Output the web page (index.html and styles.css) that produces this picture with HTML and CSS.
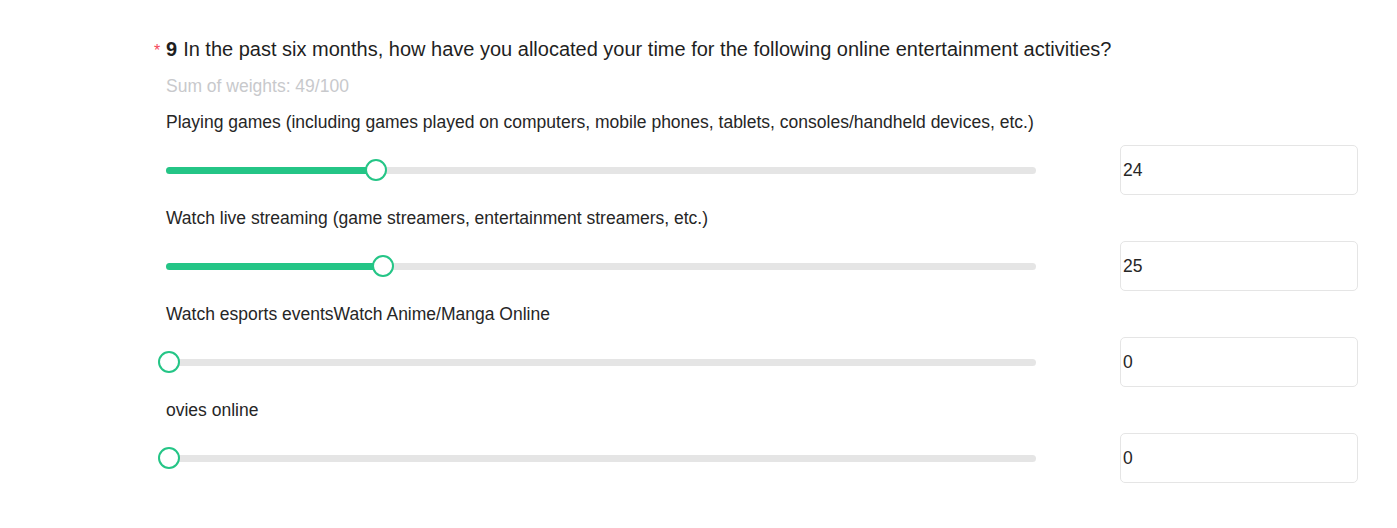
FILE: index.html
```html
<!DOCTYPE html>
<html>
<head>
<meta charset="utf-8">
<link rel="stylesheet" href="styles.css">
</head>
<body>
<div class="question">
  <div class="q-title">
    <span class="req">*</span>
    <span class="q-num">9</span>
    <span class="q-text">In the past six months, how have you allocated your time for the following online entertainment activities?</span>
  </div>
  <div class="sum">Sum of weights: 49/100</div>

  <div class="item">
    <div class="label">Playing games (including games played on computers, mobile phones, tablets, consoles/handheld devices, etc.)</div>
    <div class="slider-row">
      <div class="track">
        <div class="fill" style="width: 210px"></div>
        <div class="thumb" style="left: 199px"></div>
      </div>
      <input class="num" type="text" value="24">
    </div>
  </div>

  <div class="item">
    <div class="label">Watch live streaming (game streamers, entertainment streamers, etc.)</div>
    <div class="slider-row">
      <div class="track">
        <div class="fill" style="width: 217px"></div>
        <div class="thumb" style="left: 206px"></div>
      </div>
      <input class="num" type="text" value="25">
    </div>
  </div>

  <div class="item">
    <div class="label">Watch esports eventsWatch Anime/Manga Online</div>
    <div class="slider-row">
      <div class="track">
        <div class="fill" style="width: 3px"></div>
        <div class="thumb" style="left: -8px"></div>
      </div>
      <input class="num" type="text" value="0">
    </div>
  </div>

  <div class="item">
    <div class="label">ovies online</div>
    <div class="slider-row">
      <div class="track">
        <div class="fill" style="width: 3px"></div>
        <div class="thumb" style="left: -8px"></div>
      </div>
      <input class="num" type="text" value="0">
    </div>
  </div>
</div>
</body>
</html>
```

FILE: styles.css
```css
html, body {
  margin: 0;
  padding: 0;
  background: #ffffff;
}
body {
  font-family: "Liberation Sans", Arial, sans-serif;
  color: #262626;
}
.question {
  padding: 37px 0 0 166px;
}
.q-title {
  display: flex;
  align-items: baseline;
  font-size: 20px;
  line-height: 24px;
  color: #1f1f1f;
  margin-left: -12px;
}
.req {
  color: #f5475a;
  font-size: 16px;
  width: 12px;
  flex: none;
}
.q-num {
  font-weight: bold;
  margin-right: 6px;
}
.sum {
  margin-top: 11px;
  margin-bottom: 1px;
  font-size: 17.5px;
  line-height: 24px;
  color: #c8c9cc;
}
.item {
  padding-top: 11px;
}
.label {
  font-size: 17.5px;
  line-height: 24px;
  color: #262626;
}
.slider-row {
  display: flex;
  align-items: center;
  margin-top: 11px;
}
.track {
  position: relative;
  width: 870px;
  height: 7px;
  border-radius: 4px;
  background: #e5e5e5;
  flex: none;
}
.fill {
  position: absolute;
  left: 0;
  top: 0;
  height: 7px;
  border-radius: 4px;
  background: #24c586;
}
.thumb {
  position: absolute;
  top: -8px;
  width: 18px;
  height: 18px;
  border: 2px solid #24c586;
  border-radius: 50%;
  background: #ffffff;
}
.num {
  margin-left: 84px;
  width: 238px;
  height: 50px;
  box-sizing: border-box;
  border: 1px solid #e5e5e5;
  border-radius: 5px;
  padding: 0 2px;
  font-family: "Liberation Sans", Arial, sans-serif;
  font-size: 17.5px;
  color: #262626;
  outline: none;
  background: #fff;
}
```
